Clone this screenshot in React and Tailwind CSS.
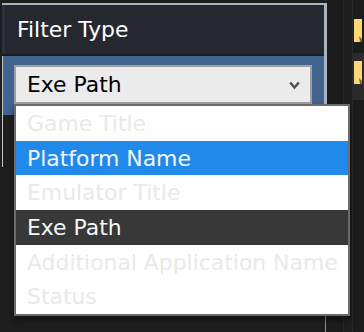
const options = [
  { label: "Game Title", state: "muted" },
  { label: "Platform Name", state: "hover" },
  { label: "Emulator Title", state: "muted" },
  { label: "Exe Path", state: "selected" },
  { label: "Additional Application Name", state: "muted" },
  { label: "Status", state: "muted" },
];

function FolderMark() {
  return (
    <svg width="8" height="23" viewBox="0 0 8 23">
      <path d="M0 0 H8 V23 H0 Z" fill="#fdd775" />
      <path d="M5 17 L8 20 V23 H6 Z" fill="#1c1c1c" opacity="0.6" />
    </svg>
  );
}

function Chevron() {
  return (
    <svg width="11" height="9" viewBox="0 0 11 9">
      <path d="M1.2 1.5 L5.5 6.5 L9.8 1.5" fill="none" stroke="#555" strokeWidth="2.6" />
    </svg>
  );
}

function OptionRow({ label, state }) {
  const tone =
    state === "hover"
      ? "bg-[#2089e9] text-[#f4f6fa]"
      : state === "selected"
      ? "bg-[#383838] text-[#f6f6f6]"
      : "bg-white text-[#e9e9e9]";
  return (
    <div className={`h-[34.67px] flex items-center pl-[11px] pt-px whitespace-nowrap ${tone}`}>
      {label}
    </div>
  );
}

export default function App() {
  return (
    <div
      className="relative w-[364px] h-[332px] overflow-hidden bg-[#1e1e1e] flex text-[21.9px] leading-none"
      style={{ fontFamily: '"DejaVu Sans", Verdana, sans-serif' }}
    >
      {/* filter panel */}
      <div className="w-[327px] h-full flex flex-col pt-[3px]">
        <div className="flex flex-col ml-[2px] border-t-2 border-r-[3px] border-[#a9b4c0]">
          <div className="h-[49px] bg-[#262830] border-l-[3px] border-[#2e3039] flex items-center pl-[12px] pt-px text-white">
            Filter Type
          </div>
          <div className="h-[2px] bg-[#1b1c21]" />
          <div className="h-[59px] bg-[#41638f] border-l border-[#c4c4c4] pl-[11px] pt-[9px]">
            <div className="w-[298px] h-[39px] border-2 border-[#9f9f9f] bg-[#ebebeb] flex items-center justify-between pl-[11px] pr-[10px] pt-px text-black">
              <span>Exe Path</span>
              <Chevron />
            </div>
          </div>
        </div>
        <div className="flex-1 flex">
          <div className="w-[2px]" />
          <div className="w-px h-[52px] bg-[#c4c4c4]" />
          <div className="flex-1" />
          <div className="w-px bg-[#7f97b2] mr-px" />
        </div>
      </div>

      {/* right edge of the neighbouring pane */}
      <div className="flex-1 flex">
        <div className="w-[16px] bg-[#1c1c1c]" />
        <div className="w-px bg-[#262626]" />
        <div className="w-[8px] bg-[#1e1e1e]" />
        <div className="w-px bg-[#2a2a2a]" />
        <div className="flex-1 flex flex-col">
          <div className="h-[53px] bg-[#1c1c1c] pt-[19px] pl-px">
            <FolderMark />
          </div>
          <div className="h-[47px] bg-[#2b2b2b] pt-[8px] pl-px">
            <FolderMark />
          </div>
          <div className="flex-1 bg-[#1c1c1c]" />
        </div>
      </div>

      {/* open dropdown list */}
      <div className="absolute left-[14px] top-[104px] w-[336px] h-[212px] border-2 border-[#6b6b6b] bg-white shadow-[0_4px_6px_rgba(0,0,0,0.45)] flex flex-col">
        {options.map((o) => (
          <OptionRow key={o.label} label={o.label} state={o.state} />
        ))}
      </div>
    </div>
  );
}
